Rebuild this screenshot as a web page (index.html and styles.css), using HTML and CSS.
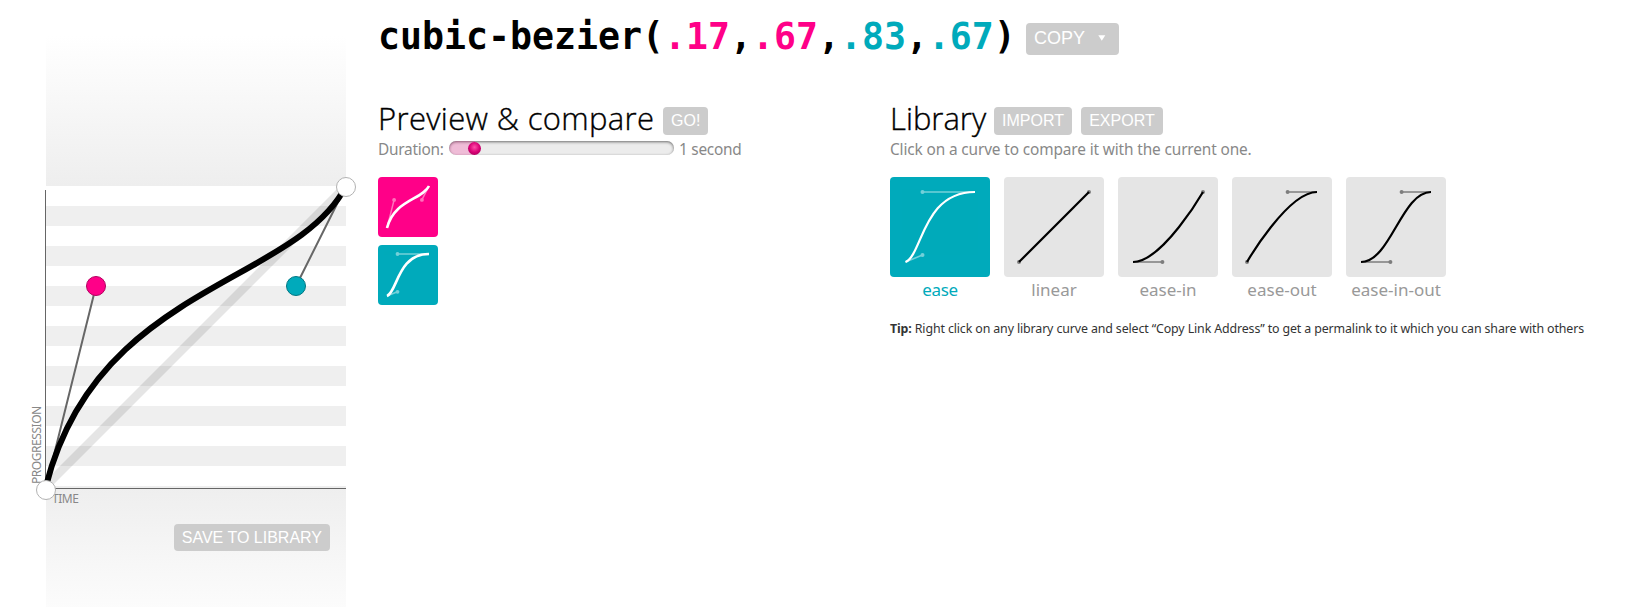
FILE: index.html
```html
<!DOCTYPE html>
<html lang="en">
<head>
<meta charset="utf-8">
<title>cubic-bezier.com</title>
<link rel="stylesheet" href="styles.css">
</head>
<body>
<aside class="plane">
  <div class="fade fade-top"></div>
  <div class="stripes"></div>
  <div class="fade fade-bottom"><button class="btn save">SAVE TO LIBRARY</button></div>
  <span class="axis time">TIME</span>
  <span class="axis progression">PROGRESSION</span>
  <svg class="graph" width="346" height="607" viewBox="0 0 346 607">
    <path d="M46 486L346 186" stroke="#000" stroke-opacity=".1" stroke-width="8.5" fill="none"/>
    <path d="M45.5 190V488.5H346" stroke="#666" fill="none"/>
    <path d="M46 487L96 286M346 186L296 286" stroke="#666" stroke-width="2" fill="none"/>
    <path d="M46 486C97 285 295 285 346 186" stroke="#000" stroke-width="6" fill="none"/>
    <g stroke-width="1">
      <circle cx="46" cy="490" r="9.5" fill="#fff" stroke="#b2b2b2"/>
      <circle cx="346" cy="187" r="9.5" fill="#fff" stroke="#b2b2b2"/>
      <circle cx="96" cy="286" r="9.5" fill="#f08" stroke="#b3005f"/>
      <circle cx="296" cy="286" r="9.5" fill="#0ab" stroke="#007783"/>
    </g>
  </svg>
</aside>
<main class="content">
  <header class="header">
    <h1 class="code">cubic-bezier(<span class="p1">.17</span>,<span class="p1">.67</span>,<span class="p2">.83</span>,<span class="p2">.67</span>)</h1>
    <button class="btn copy">COPY<svg width="8" height="6" viewBox="0 0 8 6"><path d="M0.3 0.3H7.3L3.8 5.7Z" fill="#fff"/></svg></button>
  </header>
  <div class="columns">
    <section class="preview">
      <div class="heading"><h2 class="title t-preview">Preview &amp; compare</h2><button class="btn">GO!</button></div>
      <div class="note duration"><span class="t-dur">Duration:</span><span class="slider"><span class="fill"></span><span class="thumb"></span></span><span class="t-sec">1 second</span></div>
      <div class="stack">
        <svg class="mini pink" viewBox="0 0 60 60"><g class="handle"><path d="M9 51L16.1 22.9M51 9L43.9 22.9"/><circle cx="16.1" cy="22.9" r="1.9"/><circle cx="43.9" cy="22.9" r="1.9"/></g><path class="curve" d="M9 51C16.1 22.9 43.9 22.9 51 9"/></svg>
        <svg class="mini teal" viewBox="0 0 60 60"><g class="handle"><path d="M9 51L19.5 46.8M51 9H19.5"/><circle cx="19.5" cy="46.8" r="1.9"/><circle cx="19.5" cy="9" r="1.9"/></g><path class="curve" d="M9 51C19.5 46.8 19.5 9 51 9"/></svg>
      </div>
    </section>
    <section class="library">
      <div class="heading"><h2 class="title t-lib">Library</h2><button class="btn">IMPORT</button><button class="btn export">EXPORT</button></div>
      <p class="note t-click">Click on a curve to compare it with the current one.</p>
      <div class="tiles">
        <a class="item active"><svg class="tile teal" viewBox="0 0 100 100"><g class="handle"><path d="M15.5 85L32.5 78M85 15H32.5"/><circle cx="32.5" cy="78" r="2"/><circle cx="32.5" cy="15" r="2"/></g><path class="curve" d="M15.5 85C32.5 78 32.5 15 85 15"/></svg><span>ease</span></a>
        <a class="item"><svg class="tile" viewBox="0 0 100 100"><g class="handle"><circle cx="15" cy="85" r="2"/><circle cx="85" cy="15" r="2"/></g><path class="curve" d="M15 85L85 15"/></svg><span>linear</span></a>
        <a class="item"><svg class="tile" viewBox="0 0 100 100"><g class="handle"><path d="M15 85H44.4"/><circle cx="44.4" cy="85" r="2"/><circle cx="85" cy="15" r="2"/></g><path class="curve" d="M15 85C44.4 85 85 15 85 15"/></svg><span>ease-in</span></a>
        <a class="item"><svg class="tile" viewBox="0 0 100 100"><g class="handle"><path d="M85 15H55.6"/><circle cx="55.6" cy="15" r="2"/><circle cx="15" cy="85" r="2"/></g><path class="curve" d="M15 85C15 85 55.6 15 85 15"/></svg><span>ease-out</span></a>
        <a class="item"><svg class="tile" viewBox="0 0 100 100"><g class="handle"><path d="M15 85H44.4M85 15H55.6"/><circle cx="44.4" cy="85" r="2"/><circle cx="55.6" cy="15" r="2"/></g><path class="curve" d="M15 85C44.4 85 55.6 15 85 15"/></svg><span>ease-in-out</span></a>
      </div>
      <p class="tip"><strong>Tip:</strong> Right click on any library curve and select “Copy Link Address” to get a permalink to it which you can share with others</p>
    </section>
  </div>
</main>
</body>
</html>
```
FILE: styles.css
```css
* { box-sizing: border-box; }
body {
  margin: 0;
  height: 607px;
  overflow: hidden;
  display: flex;
  background: #fff;
  color: #000;
  font-family: "Noto Sans", "Open Sans", sans-serif;
}
h1, h2, p { margin: 0; white-space: nowrap; }

.plane { position: relative; flex: none; width: 346px; padding-left: 46px; }
.fade-top { height: 186px; background: linear-gradient(to top, #eee, #fff 150px); }
.stripes { height: 300px; background: repeating-linear-gradient(#fff 0 20px, #efefef 20px 40px); }
.fade-bottom {
  height: 121px;
  padding: 38px 16px 0 0;
  display: flex;
  justify-content: flex-end;
  align-items: flex-start;
  background: linear-gradient(#eee, #fff 150px);
}
.graph { position: absolute; left: 0; top: 0; overflow: visible; }
.axis { position: absolute; font-size: 12px; line-height: 16px; color: #888; white-space: nowrap; }
.time { left: 52px; top: 491px; letter-spacing: -.45px; }
.progression {
  left: 29px;
  top: 484px;
  letter-spacing: -.45px;
  transform-origin: 0 0;
  transform: rotate(-90deg);
}

.btn {
  flex: none;
  height: 28px;
  padding: 0 8px;
  border: 0;
  border-radius: 4px;
  background: #ccc;
  color: #fff;
  font: 16px/26px "Liberation Sans", Arial, sans-serif;
}
.save { height: 27px; }
.export { width: 82px; }
.copy { height: 32px; width: 93px; padding: 0 9px 2px 8px; display: flex; align-items: center; gap: 13px; font-size: 18px; line-height: 30px; }

.content { flex: none; padding-left: 32px; }
.header { display: flex; gap: 10px; height: 107px; padding-top: 23px; }
.code { width: 638px; font: bold 36.54px/30px "DejaVu Sans Mono", monospace; margin-top: -1px; }
.p1 { color: #f08; }
.p2 { color: #0ab; }

.columns { display: flex; }
.preview { width: 512px; }
.heading { display: flex; gap: 9px; height: 28px; }
.title {
  margin-top: -2px;
  font: 300 31px/26px "Open Sans", "Noto Sans", sans-serif;
  -webkit-text-stroke: .35px #000;
}
.t-preview { width: 276px; letter-spacing: .35px; }
.t-lib { width: 95px; }
.note { height: 42px; font-size: 15.4px; line-height: 30px; color: #888; }
.t-click { letter-spacing: -.13px; }
.duration { display: flex; letter-spacing: -.25px; }
.t-dur { width: 71px; }
.t-sec { margin-left: 5px; }
.slider {
  position: relative;
  width: 225px;
  height: 14px;
  margin-top: 6px;
  overflow: hidden;
  border-radius: 7px;
  background: #ececec;
  box-shadow: inset 0 1px 3px rgba(0,0,0,.55);
}
.fill {
  display: block;
  width: 26px;
  height: 14px;
  border-radius: 7px 0 0 7px;
  background: rgba(255,0,136,.2);
}
.thumb {
  position: absolute;
  left: 19px;
  top: .5px;
  width: 13px;
  height: 13px;
  border-radius: 50%;
  background: radial-gradient(circle at 50% 40%, #ff4fa9, #d80074 50%, #900050);
}
.stack { display: flex; flex-direction: column; gap: 8px; }
.mini { width: 60px; height: 60px; border-radius: 4px; }
.mini .curve { stroke-width: 2.6; }
.tiles { display: flex; gap: 14px; }
.item { display: flex; flex-direction: column; align-items: center; width: 100px; color: #999; font-size: 17px; line-height: 26px; white-space: nowrap; }
.active { color: #0ab; }
.active span { letter-spacing: -.4px; }
.tile { width: 100px; height: 100px; border-radius: 4px; background: #e5e5e5; color: #000; }
.pink { background: #f08; color: #fff; }
.teal { background: #0ab; color: #fff; }
.handle { opacity: .45; fill: currentColor; stroke: none; }
.handle path { fill: none; stroke: currentColor; stroke-width: 1.5; }
.curve { fill: none; stroke: currentColor; stroke-width: 2.2; }
.tip { margin-top: 16px; font-size: 12.4px; letter-spacing: -.125px; line-height: 20px; color: #333; }
```
